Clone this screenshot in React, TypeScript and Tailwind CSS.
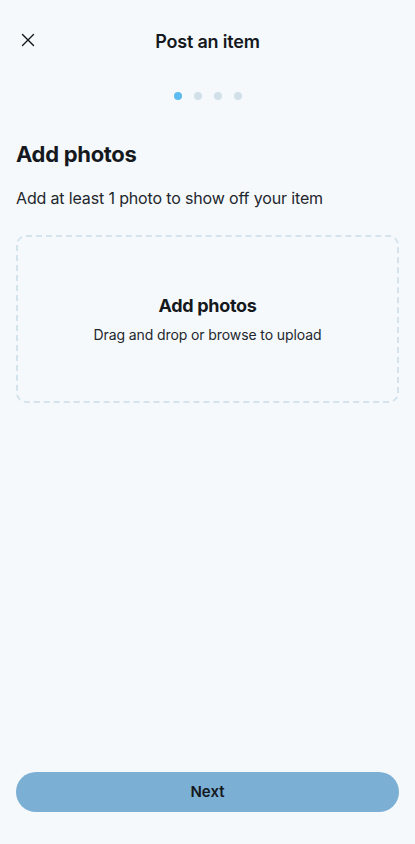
import React from "react";
import { X } from "lucide-react";

const steps = [0, 1, 2, 3];

export default function App() {
  const current = 0;

  return (
    <div
      className="min-h-[844px] w-full bg-[#f5f9fc] text-[#15191e] flex flex-col"
      style={{ fontFamily: "Inter, 'Noto Sans', sans-serif" }}
    >
      {/* Header */}
      <div className="relative flex items-center justify-center h-[40px] mt-[21px]">
        <button className="absolute left-[17px] top-[8px] text-[#15191e]">
          <X size={22} strokeWidth={1.5} />
        </button>
        <h1 className="text-[18px] font-semibold tracking-[-0.2px]">Post an item</h1>
      </div>

      {/* Step dots */}
      <div className="flex justify-center gap-[12px] mt-[31px]">
        {steps.map((s) => (
          <span
            key={s}
            className={
              s === current
                ? "w-[8px] h-[8px] rounded-full bg-[#5cbcef]"
                : "w-[8px] h-[8px] rounded-full bg-[#d2e0e9]"
            }
          />
        ))}
      </div>

      {/* Content */}
      <div className="px-[16px] mt-[40px] flex-1">
        <h2 className="text-[22px] font-bold leading-[28px] tracking-[-0.3px]">Add photos</h2>
        <p className="mt-[19px] text-[16px] leading-[22px] text-[#23272c] tracking-[-0.15px]">
          Add at least 1 photo to show off your item
        </p>

        <div className="mt-[26px] h-[168px] rounded-[10px] border-2 border-dashed border-[#d5e3ec] flex flex-col items-center justify-center">
          <div className="text-[18px] font-bold leading-[24px] tracking-[-0.3px]">Add photos</div>
          <div className="mt-[8px] text-[14px] leading-[18px] text-[#23272c] tracking-[-0.1px]">
            Drag and drop or browse to upload
          </div>
        </div>
      </div>

      {/* Footer */}
      <div className="px-[16px] pb-[32px]">
        <button className="w-full h-[40px] rounded-full bg-[#7bafd4] text-[15px] font-semibold text-[#15191e]">
          Next
        </button>
      </div>
    </div>
  );
}
